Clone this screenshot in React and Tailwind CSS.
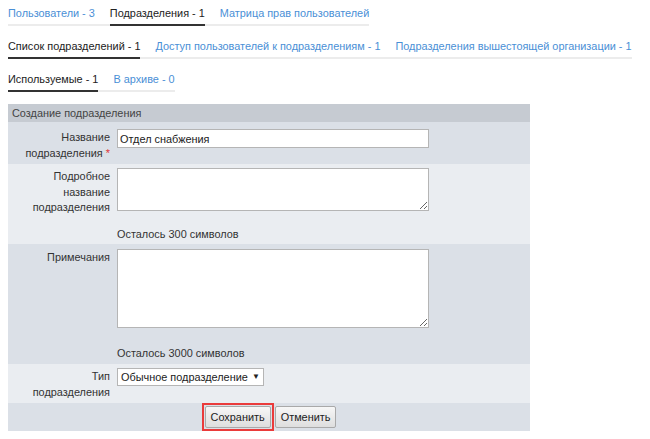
import React from "react";

const font = { fontFamily: '"Liberation Sans", Arial, sans-serif' };

function Tabs({ items, active }) {
  return (
    <div className="inline-flex gap-[15px] border-b-2 border-[#ececec] leading-[14px]">
      {items.map((t, i) => (
        <div
          key={t}
          className={
            i === active
              ? "-mb-[2px] border-b-2 border-[#333] pb-[4px] text-[#222]"
              : "pb-[4px] text-[#4a8fd6]"
          }
        >
          {t}
        </div>
      ))}
    </div>
  );
}

function Label({ children }) {
  return (
    <div className="w-[109px] shrink-0 pr-[7px] text-right leading-[16px] text-[#333]">
      {children}
    </div>
  );
}

export default function App() {
  return (
    <div className="h-[439px] w-[650px] bg-white text-[10.9px]" style={font}>
      <div className="flex flex-col gap-[13px] px-[8px] pt-[6px]">
        <div className="flex">
          <Tabs
            items={["Пользователи - 3", "Подразделения - 1", "Матрица прав пользователей"]}
            active={1}
          />
        </div>
        <div className="flex">
          <Tabs
            items={[
              "Список подразделений - 1",
              "Доступ пользователей к подразделениям - 1",
              "Подразделения вышестоящей организации - 1",
            ]}
            active={0}
          />
        </div>
        <div className="flex">
          <Tabs items={["Используемые - 1", "В архиве - 0"]} active={0} />
        </div>
      </div>

      <div className="ml-[8px] mt-[12px] w-[522px]">
        <div className="flex h-[18px] items-center bg-[#c6cbd2] pl-[4px] text-[#444]">
          Создание подразделения
        </div>

        <div className="flex h-[42px] bg-[#dbe0e7] pt-[7px]">
          <Label>
            Название
            <br />
            подразделения <span className="text-[#e03a3a]">*</span>
          </Label>
          <input
            defaultValue="Отдел снабжения"
            className="h-[19px] w-[312px] border border-[#b5b5b5] bg-white px-[2px] text-[10.9px] text-[#222] outline-none"
            style={font}
          />
        </div>

        <div className="flex h-[80px] bg-[#eaedf1] pt-[4px]">
          <Label>
            <div className="pt-[1px] leading-[15.5px]">
              Подробное
              <br />
              название
              <br />
              подразделения
            </div>
          </Label>
          <div className="flex flex-col">
            <textarea className="h-[43px] w-[312px] border border-[#b5b5b5] bg-white outline-none" />
            <div className="mt-[15px] text-[#333]">Осталось 300 символов</div>
          </div>
        </div>

        <div className="flex h-[120px] bg-[#dbe0e7] pt-[5px]">
          <Label>Примечания</Label>
          <div className="flex flex-col">
            <textarea className="h-[79px] w-[312px] border border-[#b5b5b5] bg-white outline-none" />
            <div className="mt-[17px] text-[#333]">Осталось 3000 символов</div>
          </div>
        </div>

        <div className="flex h-[39px] bg-[#eaedf1] pt-[4px]">
          <Label>
            Тип
            <br />
            подразделения
          </Label>
          <div className="flex h-[18px] w-[147px] items-center justify-between border border-[#b5b5b5] bg-white px-[3px] text-[#222]">
            <span>Обычное подразделение</span>
            <span className="text-[8px]">▼</span>
          </div>
        </div>

        <div className="flex h-[28px] items-center justify-center gap-[1px] bg-[#dbe0e7]">
          <div className="border-[2px] border-[#ea3b3b] p-[1px]">
            <button
              className="h-[22px] rounded-[2px] border border-[#a9a9a9] bg-gradient-to-b from-[#f7f7f7] to-[#dedede] px-[5px] text-[10.9px] text-[#222]"
              style={font}
            >
              Сохранить
            </button>
          </div>
          <button
            className="h-[22px] rounded-[2px] border border-[#a9a9a9] bg-gradient-to-b from-[#f7f7f7] to-[#dedede] px-[5px] text-[10.9px] text-[#222]"
            style={font}
          >
            Отменить
          </button>
        </div>
      </div>
    </div>
  );
}
